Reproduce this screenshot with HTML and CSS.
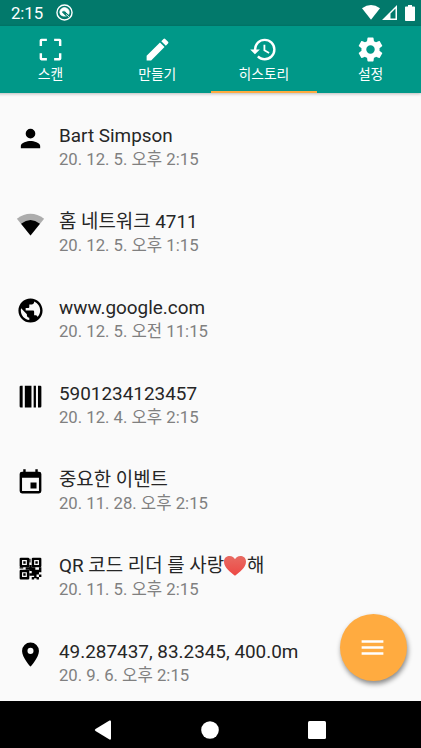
FILE: index.html
```html
<!DOCTYPE html>
<html lang="ko">
<head>
<meta charset="utf-8">
<title>히스토리</title>
<link rel="stylesheet" href="styles.css">
</head>
<body>
<div class="screen">
  <header class="status">
    <span class="clock">2:15</span>
    <svg class="notice" viewBox="0 0 18 18"><circle cx="9" cy="9" r="8" fill="none" stroke="#fff" stroke-width="1.500"/><path d="M4 8.500A5 5 0 1 1 13.500 11L10.500 8.500A2.500 2.500 0 0 0 6.500 8L11 12.800H7.500A4.500 4.500 0 0 1 4 8.500zM10.500 10.500l3.500 3.500" fill="#fff" stroke="#fff" stroke-width=".8"/><path d="M6.800 8.200l4 4" stroke="#02796b" stroke-width="1.200"/></svg>
    <div class="signals">
      <svg class="wifi" viewBox="0 0 18 15"><path d="M0 3.300Q9-3.200 18 3.300L9 14.700z"/></svg>
      <svg class="cell" viewBox="0 0 15 15"><path fill-rule="evenodd" d="M0 15L15 0V15zM8.500 8.500V13.500H13.500V3.500z"/></svg>
      <svg class="battery" viewBox="0 0 10 16"><path d="M3 0h4v1.500h2.200q.8 0 .8.800v12.900q0 .8-.8.800H.8q-.8 0-.8-.8V2.300q0-.8.8-.8H3z"/></svg>
    </div>
  </header>
  <nav class="tabs">
    <div class="tab"><svg viewBox="0 0 24 24"><path d="M3 9V4.500Q3 3 4.500 3H9v2H5v4zM15 3h4.500Q21 3 21 4.500V9h-2V5h-4zM19 15h2v4.500q0 1.500-1.500 1.500H15v-2h4zM3 15h2v4h4v2H4.500Q3 21 3 19.500z"/></svg><span>스캔</span></div>
    <div class="tab"><svg viewBox="0 0 24 24"><path d="M3 17.250V21h3.750L17.810 9.940l-3.750-3.750L3 17.250zM20.710 7.040a1 1 0 0 0 0-1.410l-2.340-2.340a1 1 0 0 0-1.410 0l-1.830 1.830 3.750 3.750 1.830-1.830z"/></svg><span>만들기</span></div>
    <div class="tab active"><svg viewBox="0 0 24 24"><path d="M13 3a9 9 0 0 0-9 9H1l3.890 3.890.07.14L9 12H6a7 7 0 1 1 7 7c-1.930 0-3.680-.790-4.940-2.060l-1.420 1.420A8.954 8.954 0 0 0 13 21a9 9 0 0 0 0-18zm-1 5v5l4.280 2.540.720-1.210-3.500-2.080V8H12z"/></svg><span>히스토리</span></div>
    <div class="tab"><svg viewBox="0 0 24 24"><path d="M19.430 12.980c.040-.320.070-.640.070-.980s-.030-.660-.070-.980l2.110-1.650c.190-.150.240-.420.120-.640l-2-3.460c-.120-.220-.390-.300-.610-.220l-2.490 1c-.520-.400-1.080-.730-1.690-.980l-.380-2.650A.488.488 0 0 0 14 2h-4c-.250 0-.460.180-.490.420l-.380 2.650c-.610.250-1.170.590-1.690.980l-2.490-1c-.230-.090-.490 0-.610.220l-2 3.460c-.130.220-.070.490.120.640l2.110 1.650c-.040.320-.070.650-.070.980s.030.660.070.980l-2.110 1.650c-.190.150-.240.420-.120.640l2 3.460c.120.220.390.300.610.220l2.490-1c.520.400 1.080.730 1.690.980l.380 2.650c.030.240.240.420.490.420h4c.250 0 .460-.180.490-.420l.380-2.650c.610-.250 1.170-.590 1.690-.980l2.490 1c.230.090.490 0 .610-.220l2-3.460c.120-.220.070-.490-.120-.640l-2.110-1.650zM12 15.500a3.500 3.500 0 1 1 0-7 3.500 3.500 0 0 1 0 7z"/></svg><span>설정</span></div>
  </nav>
  <main class="list">
    <div class="row"><svg viewBox="0 0 24 24"><path d="M12 12a4 4 0 1 0 0-8 4 4 0 0 0 0 8zm0 2c-2.670 0-8 1.340-8 4v2h16v-2c0-2.660-5.330-4-8-4z"/></svg><div><p class="title">Bart Simpson</p><p class="date">20. 12. 5. 오후 2:15</p></div></div>
    <div class="row"><svg viewBox="0 0 24 24"><path fill="#acacac" d="M.700 7.200Q12-1.200 23.300 7.200L12 21z"/><path d="M4.200 11.300Q12 5.300 19.800 11.300L12 21z"/></svg><div><p class="title">홈 네트워크 4711</p><p class="date">20. 12. 5. 오후 1:15</p></div></div>
    <div class="row"><svg viewBox="0 0 24 24"><path d="M12 2C6.480 2 2 6.480 2 12s4.480 10 10 10 10-4.480 10-10S17.520 2 12 2zm-1 17.930c-3.950-.490-7-3.850-7-7.930 0-.620.080-1.210.210-1.790L9 15v1c0 1.100.900 2 2 2v1.930zm6.900-2.540c-.260-.810-1-1.390-1.900-1.390h-1v-3c0-.550-.450-1-1-1H8v-2h2c.550 0 1-.450 1-1V7h2c1.100 0 2-.900 2-2v-.410c2.930 1.190 5 4.060 5 7.410 0 2.080-.800 3.970-2.100 5.390z"/></svg><div><p class="title">www.google.com</p><p class="date">20. 12. 5. 오전 11:15</p></div></div>
    <div class="row"><svg viewBox="0 0 24 24"><path d="M5.500 3v18H4q-1 0-1-1V4q0-1 1-1zM7.300 3h5.500v18H7.300zM14.600 3h1.900v18h-1.900zM18.200 3H20q1 0 1 1v16q0 1-1 1h-1.800z"/></svg><div><p class="title">5901234123457</p><p class="date">20. 12. 4. 오후 2:15</p></div></div>
    <div class="row"><svg viewBox="0 0 24 24"><path d="M17 12h-5v5h5v-5zM16 1v2H8V1H6v2H5a2 2 0 0 0-2 2v14a2 2 0 0 0 2 2h14a2 2 0 0 0 2-2V5a2 2 0 0 0-2-2h-1V1h-2zm3 18H5V8h14v11z"/></svg><div><p class="title">중요한 이벤트</p><p class="date">20. 11. 28. 오후 2:15</p></div></div>
    <div class="row"><svg viewBox="0 0 24 24"><path fill-rule="evenodd" d="M4 3h6q1 0 1 1v6q0 1-1 1H4q-1 0-1-1V4q0-1 1-1zM5 5v4h4V5zM14 3h6q1 0 1 1v6q0 1-1 1h-6q-1 0-1-1V4q0-1 1-1zM15 5v4h4V5zM4 13h6q1 0 1 1v6q0 1-1 1H4q-1 0-1-1v-6q0-1 1-1zM5 15v4h4v-4z"/><path d="M6 6h2v2H6zM16 6h2v2h-2zM6 16h2v2H6zM11 4h1v3h-1zM11 9h2v4h-2zM8 11h5v2H8zM3 11h3v1H3zM13 11h3v2h3v-2h2v4h-2v2h2v2h-2v-2h-2v2h2v2h-2v-1h-2v-2h-4v-2h2v-2h-2v-2h2zM13 19h2v2h-2z"/></svg><div><p class="title">QR 코드 리더 를 사랑<svg class="heart" viewBox="0 0 22 20"><defs><linearGradient id="red" x2="0" y2="1"><stop stop-color="#e86b62"/><stop offset="1" stop-color="#ed4844"/></linearGradient></defs><path fill="url(#red)" d="M11 19.800C7 16.500 0 12 0 5.800 0 1.500 3 0 5.600 0 8.300 0 10 1.500 11 3.300 12 1.500 13.700 0 16.400 0 19 0 22 1.500 22 5.800 22 12 15 16.500 11 19.800z"/></svg>해</p><p class="date">20. 11. 5. 오후 2:15</p></div></div>
    <div class="row"><svg viewBox="0 0 24 24"><path d="M12 2a7 7 0 0 0-7 7c0 5.250 7 13 7 13s7-7.750 7-13a7 7 0 0 0-7-7zm0 9.500a2.500 2.500 0 1 1 0-5 2.500 2.500 0 0 1 0 5z"/></svg><div><p class="title">49.287437, 83.2345, 400.0m</p><p class="date">20. 9. 6. 오후 2:15</p></div></div>
  </main>
  <div class="fab"><svg viewBox="0 0 24 24"><path d="M3 18h18v-2H3v2zm0-5h18v-2H3v2zm0-7v2h18V6H3z"/></svg></div>
  <footer class="navbar">
    <svg viewBox="0 0 20 20"><path d="M2.500 9Q1 10 2.500 11L16.500 19.500Q18 20 18 18.500V1.500Q18 0 16.500.500z"/></svg>
    <svg viewBox="0 0 20 20"><circle cx="10" cy="10" r="8.800"/></svg>
    <svg viewBox="0 0 20 20"><rect x="1" y="1" width="18" height="18" rx="1.500"/></svg>
  </footer>
</div>
</body>
</html>
```
FILE: styles.css
```css
* { box-sizing: border-box; }
body { margin: 0; }
p { margin: 0; }
svg { display: block; flex: none; }
.screen {
  position: relative;
  width: 421px;
  height: 748px;
  display: flex;
  flex-direction: column;
  overflow: hidden;
  background: #fafafa;
  font-family: Roboto, "Noto Sans CJK KR", sans-serif;
}
.status {
  height: 26px;
  flex: none;
  display: flex;
  align-items: center;
  padding: 0 6px 0 11px;
  background: #02796b;
  color: #fff;
  fill: #fff;
}
.clock { width: 45px; font-size: 16.8px; line-height: 26px; letter-spacing: -0.1px; }
.notice { width: 17px; height: 17px; margin-top: -1px; }
.signals { display: flex; align-items: center; margin-left: auto; margin-top: -1px; }
.wifi { width: 18px; height: 15px; margin-right: 2px; }
.cell { width: 15px; height: 15px; margin-right: 8px; }
.battery { width: 10px; height: 16px; }
.tabs {
  height: 67px;
  flex: none;
  display: grid;
  grid-template-columns: repeat(4, 106.7px);
  margin-left: -2.8px;
  background: #009888;
  color: #fff;
  fill: #fff;
  box-shadow: 0 1px 3px rgba(0, 0, 0, .25);
}
.tab { display: flex; flex-direction: column; align-items: center; padding-top: 9px; font-size: 13.8px; line-height: 20px; }
.tab svg { width: 29px; height: 29px; }
.tab.active { border-bottom: 2.5px solid #ffab40; }
.list { flex: 1; min-height: 0; padding-top: 23px; overflow: hidden; }
.row { height: 86px; display: flex; padding-left: 15.6px; }
.row > svg { width: 29px; height: 29px; margin: 8px 14.4px 0 0; }
.row > div { padding-top: 8px; }
.title { height: 24px; font-size: 18.9px; line-height: 24px; color: #262626; white-space: nowrap; }
.date { height: 24px; font-size: 16.7px; line-height: 24px; color: #808080; white-space: nowrap; }
.heart { display: inline-block; width: 22px; height: 20px; margin: 0 1px 0 0; vertical-align: -4px; }
.fab {
  position: absolute;
  left: 339.5px;
  top: 614px;
  width: 67px;
  height: 67px;
  display: grid;
  place-items: center;
  border-radius: 50%;
  background: #ffab40;
  fill: #fff;
  box-shadow: 1px 3px 5px rgba(0, 0, 0, .45);
}
.fab svg { width: 29px; height: 29px; margin-left: -1px; }
.navbar {
  height: 47px;
  flex: none;
  display: flex;
  align-items: center;
  justify-content: center;
  gap: 87px;
  padding: 10px 1px 0 0;
  background: #000;
  fill: #fff;
}
.navbar svg { width: 20px; height: 20px; }
```
